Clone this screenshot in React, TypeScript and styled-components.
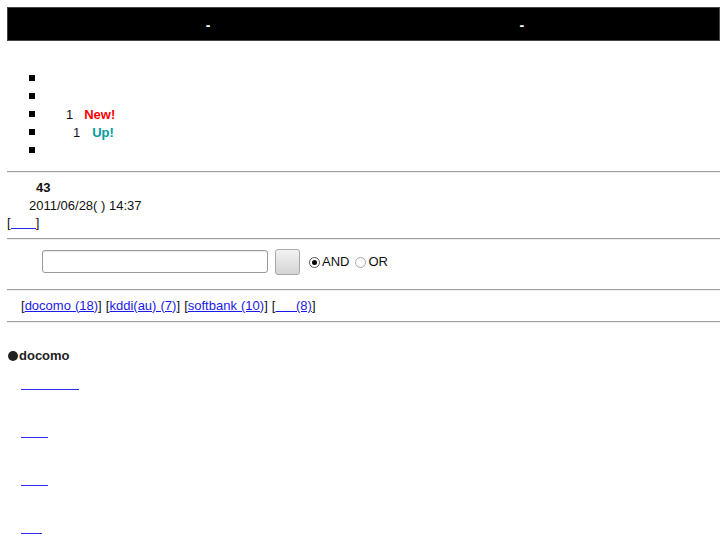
import React from "react";
import styled, { createGlobalStyle } from "styled-components";

const Global = createGlobalStyle`
  html, body { margin: 0; padding: 0; background: #fff; }
  body {
    padding: 7px;
    font-family: "Liberation Sans", Arial, sans-serif;
    font-size: 13px;
    color: #111;
  }
`;

const Header = styled.header`
  box-sizing: border-box;
  height: 34px;
  background: #000;
  border: 1px solid #444;
  display: flex;
  align-items: center;
  justify-content: center;
  padding-left: 3px;
  padding-top: 1px;
  color: #fff;
  font-weight: bold;
  font-size: 14px;
`;

const Blank = styled.span<{ $w: number }>`
  display: inline-block;
  width: ${(p) => p.$w}px;
`;

const List = styled.ul`
  margin: 28px 0 0;
  padding: 0 0 0 22px;
  list-style: none;
`;

const Item = styled.li`
  display: flex;
  align-items: center;
  height: 18px;
  &::before {
    content: "";
    width: 6px;
    height: 6px;
    background: #000;
    margin-right: 13px;
  }
`;

const Badge = styled.span<{ $c: string }>`
  color: ${(p) => p.$c};
  font-weight: bold;
`;

const Rule = styled.hr<{ $top: number; $bottom: number }>`
  margin: ${(p) => p.$top}px 0 ${(p) => p.$bottom}px;
  border: 0;
  border-top: 1px solid #a0a0a0;
  border-bottom: 1px solid #eee;
  height: 0;
`;

const Line = styled.div<{ $indent?: number; $bold?: boolean }>`
  height: 17.5px;
  line-height: 17.5px;
  padding-left: ${(p) => p.$indent ?? 0}px;
  font-weight: ${(p) => (p.$bold ? "bold" : "normal")};
  white-space: pre;
`;

const Info = styled.div``;

const BlankLink = styled.a<{ $w: number }>`
  display: inline-block;
  width: ${(p) => p.$w}px;
  height: 12px;
  border-bottom: 1px solid #2a2af0;
  vertical-align: -2px;
`;

const SearchRow = styled.form`
  display: flex;
  align-items: center;
  height: 26px;
  padding-left: 35px;
`;

const TextInput = styled.div`
  box-sizing: border-box;
  width: 226px;
  height: 23px;
  border: 1px solid #9a9a9a;
  border-radius: 3px;
  background: #fff;
  box-shadow: inset 0 1px 1px rgba(0, 0, 0, 0.08);
`;

const Button = styled.div`
  box-sizing: border-box;
  width: 25px;
  height: 26px;
  margin-left: 7px;
  border: 1px solid #a8a8a8;
  border-radius: 3px;
  background: linear-gradient(#f2f2f2, #d4d4d4);
`;

const RadioLabel = styled.label<{ $gap: number }>`
  display: flex;
  align-items: center;
  margin-left: ${(p) => p.$gap}px;
  font-size: 13px;
  color: #111;
`;

const Radio = styled.span<{ $on?: boolean }>`
  box-sizing: border-box;
  width: 11px;
  height: 11px;
  margin-right: 2px;
  margin-top: 2px;
  border-radius: 50%;
  border: 1px solid ${(p) => (p.$on ? "#555" : "#aaa")};
  background: #fff;
  display: flex;
  align-items: center;
  justify-content: center;
  &::after {
    content: "";
    width: 5px;
    height: 5px;
    border-radius: 50%;
    background: ${(p) => (p.$on ? "#000" : "transparent")};
  }
`;

const Carriers = styled.div`
  height: 18px;
  line-height: 18px;
  padding-left: 14px;
  color: #111;
  white-space: pre;
  word-spacing: 0.5px;
  a {
    color: #1a1ae8;
    text-decoration: underline;
  }
`;

const SectionTitle = styled.h2`
  margin: 24px 0 0;
  display: flex;
  align-items: center;
  height: 18px;
  font-size: 13px;
  font-weight: bold;
  color: #222;
  padding-left: 1px;
  &::before {
    content: "";
    width: 10px;
    height: 10px;
    border-radius: 50%;
    background: #222;
    margin-right: 1px;
  }
`;

const Entries = styled.div`
  padding-top: 10px;
`;

const Entry = styled.div`
  height: 18px;
  line-height: 18px;
  padding-left: 14px;
  margin-bottom: 30px;
`;

export default function App() {
  return (
    <>
      <Global />
      <Header>
        <span>-</span>
        <Blank $w={309} />
        <span>-</span>
      </Header>
      <List>
        <Item />
        <Item />
        <Item>
          <Blank $w={18} />
          1<Blank $w={11} />
          <Badge $c="#ff0000">New!</Badge>
        </Item>
        <Item>
          <Blank $w={25} />
          1<Blank $w={12} />
          <Badge $c="#009c9c">Up!</Badge>
        </Item>
        <Item />
      </List>
      <Rule $top={12} $bottom={6} />
      <Info>
        <Line $indent={29} $bold>
          43
        </Line>
        <Line $indent={22}>2011/06/28( ) 14:37</Line>
        <Line>
          [<BlankLink href="#" $w={25} />]
        </Line>
      </Info>
      <Rule $top={6} $bottom={9} />
      <SearchRow>
        <TextInput />
        <Button />
        <RadioLabel $gap={9}>
          <Radio $on />
          AND
        </RadioLabel>
        <RadioLabel $gap={6}>
          <Radio />
          OR
        </RadioLabel>
      </SearchRow>
      <Rule $top={14} $bottom={6} />
      <Carriers>
        [<a href="#">docomo (18)</a>] [<a href="#">kddi(au) (7)</a>] [<a href="#">softbank (10)</a>] [<a href="#">{"\u00A0\u00A0\u00A0\u00A0 (8)"}</a>]
      </Carriers>
      <Rule $top={6} $bottom={0} />
      <SectionTitle>docomo</SectionTitle>
      <Entries>
        <Entry>
          <BlankLink href="#" $w={58} />
        </Entry>
        <Entry>
          <BlankLink href="#" $w={27} />
        </Entry>
        <Entry>
          <BlankLink href="#" $w={27} />
        </Entry>
        <Entry>
          <BlankLink href="#" $w={21} />
        </Entry>
      </Entries>
    </>
  );
}
